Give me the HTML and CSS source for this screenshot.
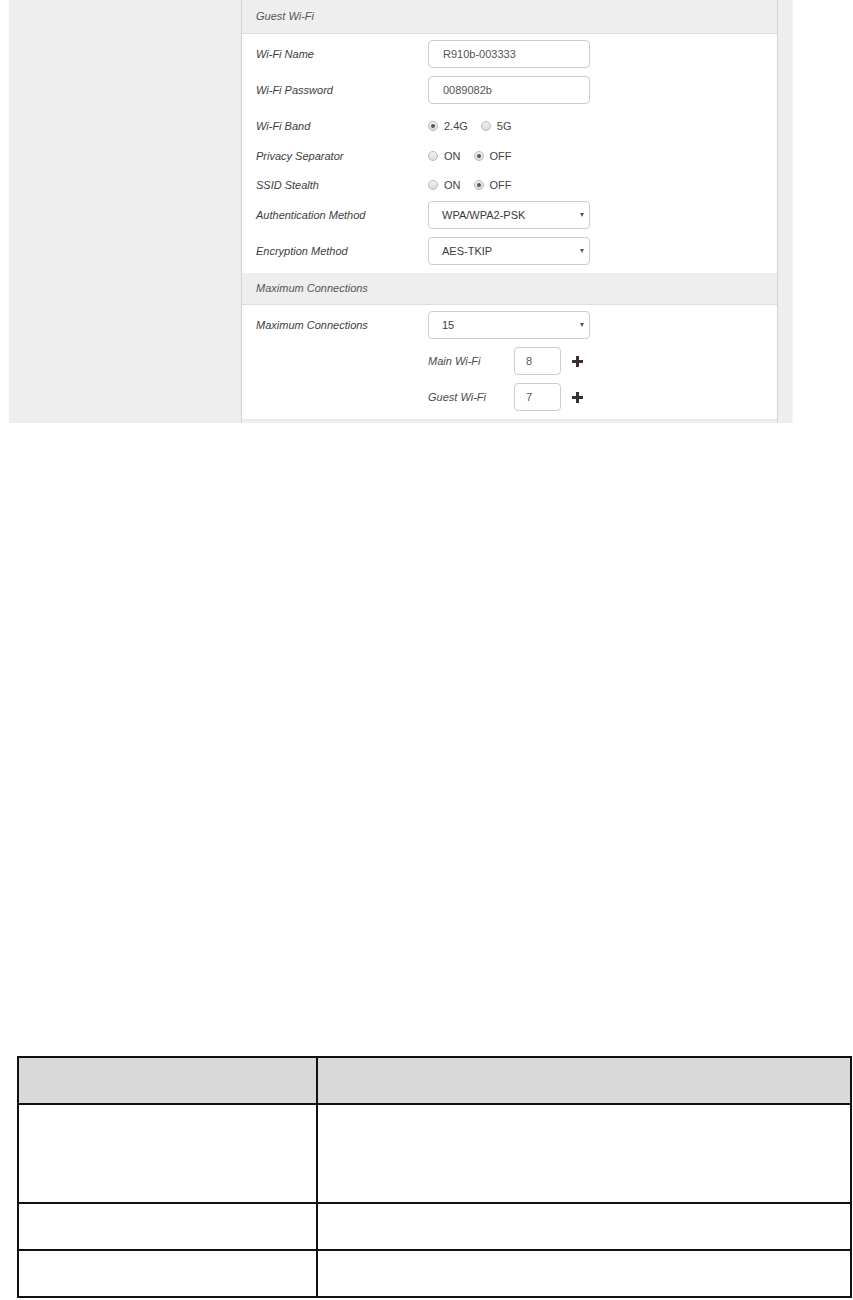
FILE: index.html
```html
<!DOCTYPE html>
<html>
<head>
<meta charset="utf-8">
<link rel="stylesheet" href="styles.css">
</head>
<body>
<div class="screen">
  <div class="sidebar"></div>
  <div class="panel">
    <div class="sec-head first">Guest Wi-Fi</div>
    <div class="sec-body body-guest">
      <div class="row"><span class="label">Wi-Fi Name</span><input class="field" type="text" value="R910b-003333" readonly></div>
      <div class="row mt8"><span class="label">Wi-Fi Password</span><input class="field" type="text" value="0089082b" readonly></div>
      <div class="row mt8"><span class="label">Wi-Fi Band</span>
        <div class="radios"><span class="radio checked"></span><span class="opt">2.4G</span><span class="radio"></span><span class="opt">5G</span></div>
      </div>
      <div class="row mt2"><span class="label">Privacy Separator</span>
        <div class="radios"><span class="radio"></span><span class="opt">ON</span><span class="radio checked"></span><span class="opt">OFF</span></div>
      </div>
      <div class="row mt1"><span class="label">SSID Stealth</span>
        <div class="radios"><span class="radio"></span><span class="opt">ON</span><span class="radio checked"></span><span class="opt">OFF</span></div>
      </div>
      <div class="row mt2"><span class="label">Authentication Method</span>
        <div class="select"><span>WPA/WPA2-PSK</span><span class="caret"></span></div>
      </div>
      <div class="row mt8"><span class="label">Encryption Method</span>
        <div class="select"><span>AES-TKIP</span><span class="caret"></span></div>
      </div>
    </div>
    <div class="sec-head">Maximum Connections</div>
    <div class="sec-body">
      <div class="row"><span class="label">Maximum Connections</span>
        <div class="select"><span>15</span><span class="caret"></span></div>
      </div>
      <div class="row sub mt8"><span class="sublabel">Main Wi-Fi</span><input class="field small" type="text" value="8" readonly>
        <svg class="plus" width="11" height="11" viewBox="0 0 11 11"><rect x="4" y="0" width="3" height="11"/><rect x="0" y="4" width="11" height="3"/></svg>
      </div>
      <div class="row sub mt8"><span class="sublabel">Guest Wi-Fi</span><input class="field small" type="text" value="7" readonly>
        <svg class="plus" width="11" height="11" viewBox="0 0 11 11"><rect x="4" y="0" width="3" height="11"/><rect x="0" y="4" width="11" height="3"/></svg>
      </div>
    </div>
    <div class="sec-next"></div>
  </div>
  <div class="rightbar"></div>
</div>

<div class="table">
  <div class="cell head c1"></div><div class="cell head c2"></div>
  <div class="cell tall c1"></div><div class="cell tall c2"></div>
  <div class="cell c1"></div><div class="cell c2"></div>
  <div class="cell last c1"></div><div class="cell last c2"></div>
</div>
</body>
</html>
```
FILE: styles.css
```css
html, body {
  margin: 0;
  padding: 0;
  background: #ffffff;
}
body {
  font-family: "Liberation Sans", Arial, sans-serif;
  font-size: 11px;
  color: #444;
}
.screen {
  margin-left: 9px;
  width: 784px;
  height: 423px;
  display: flex;
  background: #eeeeee;
}
.sidebar {
  width: 232px;
  flex: none;
}
.panel {
  width: 535px;
  flex: none;
  background: #ffffff;
  border-left: 1px solid #d2d2d2;
  border-right: 1px solid #d2d2d2;
  display: flex;
  flex-direction: column;
}
.rightbar {
  width: 15px;
  flex: none;
  border-right: 1px solid #f4f4f4;
  box-sizing: border-box;
}
.sec-head {
  height: 31px;
  line-height: 30px;
  padding-left: 14px;
  background: #eeeeee;
  border-bottom: 1px solid #dcdcdc;
  font-style: italic;
  color: #555;
}
.sec-head.first {
  height: 33px;
  line-height: 32px;
}
.sec-body {
  padding: 6px 0 8px 0;
}
.row {
  height: 28px;
  display: flex;
  align-items: center;
  padding-left: 14px;
}
.mt8 { margin-top: 8px; }
.mt2 { margin-top: 2px; }
.mt1 { margin-top: 1px; }
.label {
  width: 172px;
  flex: none;
  font-style: italic;
  color: #3d3d3d;
}
.row.sub {
  padding-left: 186px;
}
.sublabel {
  width: 86px;
  flex: none;
  font-style: italic;
  color: #4a4a4a;
}
.field {
  box-sizing: border-box;
  width: 162px;
  height: 28px;
  margin: 0;
  padding: 0 0 0 14px;
  border: 1px solid #cccccc;
  border-radius: 4px;
  font-family: "Liberation Sans", Arial, sans-serif;
  font-size: 11px;
  color: #555;
  background: #fff;
  outline: none;
}
.field.small {
  width: 47px;
  padding-left: 11px;
}
.plus {
  margin-left: 11px;
  fill: #3b2e2e;
}
.radios {
  display: flex;
  align-items: center;
  color: #444;
}
.radio {
  box-sizing: border-box;
  width: 10px;
  height: 10px;
  border-radius: 50%;
  border: 1px solid #b8b8b8;
  background: linear-gradient(#f4f4f4, #dadada);
  margin-right: 6px;
  display: flex;
  align-items: center;
  justify-content: center;
}
.radio.checked::after {
  content: "";
  width: 4px;
  height: 4px;
  border-radius: 50%;
  background: #555;
}
.opt {
  margin-right: 13px;
}
.select {
  box-sizing: border-box;
  width: 162px;
  height: 28px;
  border: 1px solid #cccccc;
  border-radius: 4px;
  padding: 0 5px 0 13px;
  display: flex;
  align-items: center;
  justify-content: space-between;
  color: #3a3a3a;
  background: #fff;
}
.caret {
  width: 0;
  height: 0;
  border-left: 2.5px solid transparent;
  border-right: 2.5px solid transparent;
  border-top: 4px solid #555;
}
.sec-next {
  flex: 1;
  background: #efefef;
  border-top: 1px solid #e6e6e6;
}
.table {
  margin: 633px 0 0 17px;
  width: 835px;
  box-sizing: border-box;
  display: grid;
  grid-template-columns: 299px 534px;
  border-top: 2px solid #111;
  border-left: 2px solid #111;
}
.cell {
  box-sizing: border-box;
  height: 47px;
  border-right: 2px solid #111;
  border-bottom: 2px solid #111;
}
.cell.head {
  height: 47px;
  background: #d9d9d9;
}
.cell.tall {
  height: 99px;
}
.cell.last {
  height: 47px;
}
```
